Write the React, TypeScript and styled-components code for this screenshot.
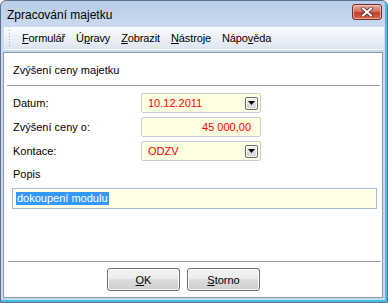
import React from "react";
import styled, { createGlobalStyle } from "styled-components";

const GlobalStyle = createGlobalStyle`
  html, body { margin: 0; padding: 0; background: #ffffff; }
  body {
    font-family: "Liberation Sans", Arial, sans-serif;
    font-size: 11px;
    color: #000;
  }
  * { box-sizing: border-box; }
`;

const Window = styled.div`
  width: 388px;
  height: 303px;
  display: flex;
  flex-direction: column;
  border: 1px solid #5a7291;
  border-radius: 6px 6px 0 0;
  background: linear-gradient(to bottom, #b7cde8 0px, #cad9ee 24px, #c8d8ec 100%);
  box-shadow: inset -2px -2px 0 #3fc1e6;
  overflow: hidden;
`;

const TitleBar = styled.div`
  height: 26px;
  flex: none;
  display: flex;
  align-items: flex-start;
  justify-content: space-between;
  padding: 0 5px 0 6px;
`;

const Title = styled.span`
  font-size: 12px;
  line-height: 14px;
  margin-top: 7px;
  color: #000;
`;

const CloseButton = styled.div`
  width: 30px;
  height: 16px;
  margin-top: 3px;
  border: 1px solid #6b2c2c;
  border-radius: 3px;
  background: linear-gradient(to bottom, #e9a99b 0%, #d57564 45%, #c23f2c 55%, #d9624a 100%);
  box-shadow: inset 0 0 0 1px rgba(255, 220, 210, 0.6);
  display: flex;
  align-items: center;
  justify-content: center;
`;

const FrameBody = styled.div`
  flex: 1;
  display: flex;
  flex-direction: column;
  padding: 0 4px 4px 2px;
  min-height: 0;
`;

const MenuBar = styled.div`
  height: 23px;
  flex: none;
  margin-left: 1px;
  margin-right: -1px;
  display: flex;
  align-items: center;
  padding-left: 4px;
  background: linear-gradient(to bottom, #fbfcfe 0%, #eef2f9 45%, #dde5f1 100%);
  border-bottom: 1px solid #f4f7fb;
`;

const Gripper = styled.span`
  width: 3px;
  height: 18px;
  margin-right: 6px;
  background-image: radial-gradient(circle, #9aa6b8 0.8px, transparent 1px);
  background-size: 3px 3px;
`;

const MenuItem = styled.span`
  padding: 0 5px;
  line-height: 14px;
  margin-right: 1px;
  letter-spacing: -0.12px;
`;

const Key = styled.span`
  text-decoration: underline;
`;

const Panel = styled.div`
  flex: 1;
  margin-top: 2px;
  border: 1px solid #8e99aa;
  background: #ffffff;
  display: flex;
  flex-direction: column;
  min-height: 0;
`;

const SectionTitle = styled.div`
  padding: 10px 0 8px 9px;
  line-height: 14px;
`;

const Separator = styled.div<{ $left: number; $right: number }>`
  height: 1px;
  flex: none;
  background: #a0a0a0;
  margin-left: ${(p) => p.$left}px;
  margin-right: ${(p) => p.$right}px;
`;

const FormGrid = styled.div`
  display: grid;
  grid-template-columns: 128px 120px;
  grid-auto-rows: 20px;
  row-gap: 4px;
  margin-top: 7px;
  padding-left: 9px;
  align-items: center;
`;

const Label = styled.span`
  line-height: 14px;
`;

const Field = styled.div<{ $align?: "left" | "right" }>`
  height: 20px;
  display: flex;
  align-items: center;
  justify-content: ${(p) => (p.$align === "right" ? "flex-end" : "space-between")};
  padding: 0 ${(p) => (p.$align === "right" ? "9px" : "2px")} 0 6px;
  border: 1px solid #c9cdd4;
  border-radius: 2px;
  background: #ffffe1;
  color: #ff0000;
  line-height: 14px;
`;

const DropButton = styled.span`
  width: 13px;
  height: 13px;
  border: 1px solid #6e6e6e;
  border-radius: 2px;
  background: linear-gradient(to bottom, #f6f6f6 0%, #e3e3e3 50%, #d2d2d2 100%);
  box-shadow: inset 0 0 0 1px #fafafa;
  display: flex;
  align-items: center;
  justify-content: center;
`;

const PopisLabel = styled.div`
  margin-top: 6px;
  padding-left: 9px;
  line-height: 14px;
`;

const PopisField = styled.div`
  margin: 7px 5px 0 8px;
  height: 21px;
  border: 1px solid #a5bcd9;
  background: #ffffe6;
  display: flex;
  align-items: center;
  padding-left: 3px;
`;

const Selected = styled.span`
  background: #3399ff;
  color: #ffffff;
  line-height: 13px;
  padding: 0 1px;
`;

const Spacer = styled.div`
  flex: 1;
`;

const ButtonRow = styled.div`
  display: flex;
  gap: 7px;
  padding: 6px 0 6px 103px;
`;

const Button = styled.button`
  width: 73px;
  height: 23px;
  border: 1px solid #707070;
  border-radius: 3px;
  background: linear-gradient(to bottom, #f2f2f2 0%, #ebebeb 50%, #dddddd 50%, #cfcfcf 100%);
  box-shadow: inset 0 0 0 1px #fbfbfb;
  font-family: "Liberation Sans", Arial, sans-serif;
  font-size: 11px;
  color: #000;
  padding: 0;
`;

const Triangle = () => (
  <svg width="7" height="4" viewBox="0 0 7 4">
    <path d="M0 0 H7 L3.5 4 Z" fill="#000" />
  </svg>
);

const CloseX = () => (
  <svg width="12" height="10" viewBox="0 0 12 10">
    <path d="M2 1.5 L10 8.5 M10 1.5 L2 8.5" stroke="#5a2a2a" strokeWidth="3.6" strokeLinecap="square" />
    <path d="M2 1.5 L10 8.5 M10 1.5 L2 8.5" stroke="#ffffff" strokeWidth="2" strokeLinecap="square" />
  </svg>
);

export default function App() {
  return (
    <>
      <GlobalStyle />
      <Window>
        <TitleBar>
          <Title>Zpracování majetku</Title>
          <CloseButton>
            <CloseX />
          </CloseButton>
        </TitleBar>
        <FrameBody>
          <MenuBar>
            <Gripper />
            <MenuItem><Key>F</Key>ormulář</MenuItem>
            <MenuItem>Ú<Key>p</Key>ravy</MenuItem>
            <MenuItem><Key>Z</Key>obrazit</MenuItem>
            <MenuItem><Key>N</Key>ástroje</MenuItem>
            <MenuItem>Nápo<Key>v</Key>ěda</MenuItem>
          </MenuBar>
          <Panel>
            <SectionTitle>Zvýšení ceny majetku</SectionTitle>
            <Separator $left={3} $right={2} />
            <FormGrid>
              <Label>Datum:</Label>
              <Field>
                <span>10.12.2011</span>
                <DropButton><Triangle /></DropButton>
              </Field>
              <Label>Zvýšení ceny o:</Label>
              <Field $align="right">45 000,00</Field>
              <Label>Kontace:</Label>
              <Field>
                <span>ODZV</span>
                <DropButton><Triangle /></DropButton>
              </Field>
            </FormGrid>
            <PopisLabel>Popis</PopisLabel>
            <PopisField>
              <Selected>dokoupení modulu</Selected>
            </PopisField>
            <Spacer />
            <Separator $left={4} $right={1} />
            <ButtonRow>
              <Button><Key>O</Key>K</Button>
              <Button><Key>S</Key>torno</Button>
            </ButtonRow>
          </Panel>
        </FrameBody>
      </Window>
    </>
  );
}
